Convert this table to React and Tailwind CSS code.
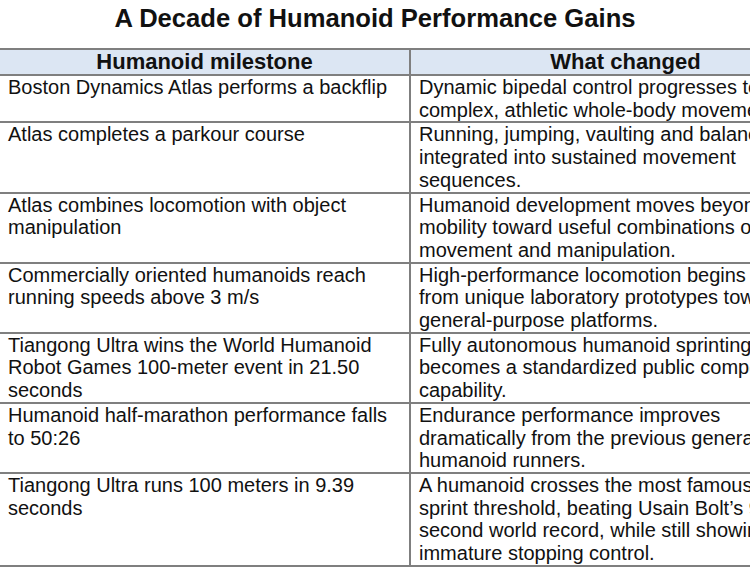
const rows = [
  {
    milestone: 'Boston Dynamics Atlas performs a backflip',
    change: ['Dynamic bipedal control progresses to', 'complex, athletic whole-body movement.'],
  },
  {
    milestone: 'Atlas completes a parkour course',
    change: ['Running, jumping, vaulting and balance are', 'integrated into sustained movement', 'sequences.'],
  },
  {
    milestone: 'Atlas combines locomotion with object manipulation',
    change: ['Humanoid development moves beyond', 'mobility toward useful combinations of', 'movement and manipulation.'],
  },
  {
    milestone: 'Commercially oriented humanoids reach running speeds above 3 m/s',
    change: ['High-performance locomotion begins to move', 'from unique laboratory prototypes toward', 'general-purpose platforms.'],
  },
  {
    milestone: 'Tiangong Ultra wins the World Humanoid Robot Games 100-meter event in 21.50 seconds',
    change: ['Fully autonomous humanoid sprinting', 'becomes a standardized public competition', 'capability.'],
  },
  {
    milestone: 'Humanoid half-marathon performance falls to 50:26',
    change: ['Endurance performance improves', 'dramatically from the previous generation of', 'humanoid runners.'],
  },
  {
    milestone: 'Tiangong Ultra runs 100 meters in 9.39 seconds',
    change: [
      'A humanoid crosses the most famous',
      'sprint threshold, beating Usain Bolt\u2019s 9.58-',
      'second world record, while still showing',
      'immature stopping control.',
    ],
  },
]

export default function App() {
  return (
    <div className="w-[750px] h-[575px] overflow-hidden bg-white text-[#111] font-['Liberation_Sans',Arial,sans-serif]">
      <h1 className="pt-[4px] pb-[15px] text-center text-[25.6px] leading-[29px] font-bold">
        A Decade of Humanoid Performance Gains
      </h1>
      <table className="w-[840px] table-fixed border-collapse">
        <colgroup>
          <col className="w-[410px]" />
          <col className="w-[430px]" />
        </colgroup>
        <thead>
          <tr className="bg-[#dce6f3]">
            <th className="border-y-2 border-r-2 border-[#7f7f7f] px-2 text-center text-[22px] leading-[24px] font-bold">
              Humanoid milestone
            </th>
            <th className="border-y-2 border-[#7f7f7f] px-2 text-center text-[22px] leading-[24px] font-bold">
              What changed
            </th>
          </tr>
        </thead>
        <tbody className="text-[20px] leading-[22.7px]">
          {rows.map((r) => (
            <tr key={r.milestone}>
              <td className="border-b-2 border-r-2 border-[#7f7f7f] pl-2 pr-2 p-0 align-top">
                {r.milestone}
              </td>
              <td className="border-b-2 border-[#7f7f7f] pl-2 pr-2 p-0 align-top whitespace-nowrap">
                {r.change.map((line, i) => (
                  <div key={i}>{line}</div>
                ))}
              </td>
            </tr>
          ))}
        </tbody>
      </table>
    </div>
  )
}
